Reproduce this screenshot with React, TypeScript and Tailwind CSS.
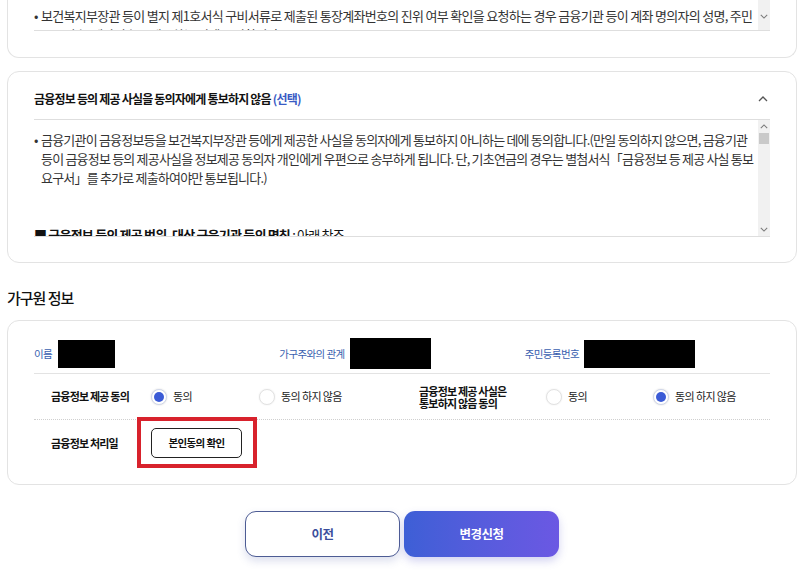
import { FC } from "react";

const FONT = { fontFamily: '"Noto Sans CJK KR", "Noto Sans", sans-serif' };

const ChevronUp: FC<{ className?: string }> = ({ className }) => (
  <svg viewBox="0 0 10 6" className={className} fill="none" stroke="currentColor" strokeWidth="1.3">
    <path d="M1 5 L5 1 L9 5" />
  </svg>
);

const ChevronDown: FC<{ className?: string }> = ({ className }) => (
  <svg viewBox="0 0 10 6" className={className} fill="none" stroke="currentColor" strokeWidth="1.3">
    <path d="M1 1 L5 5 L9 1" />
  </svg>
);

// 가짜 스크롤바
const ScrollBar: FC<{ thumb?: boolean; up?: boolean }> = ({ thumb = true, up = true }) => (
  <div className="w-[12px] shrink-0 bg-[#f1f1f1] flex flex-col items-center justify-between py-[4px] text-[#7a7a7a]">
    <div className="flex flex-col items-center w-full">
      {up && <ChevronUp className="w-[8px] h-[5px]" />}
      {thumb && <div className="w-[10px] h-[11px] bg-[#c9c9c9] mt-[4px]" />}
    </div>
    <ChevronDown className="w-[8px] h-[5px]" />
  </div>
);

const Radio: FC<{ checked?: boolean; label: string; width: string }> = ({ checked, label, width }) => (
  <div className={`flex items-center gap-[6px] ${width}`}>
    {checked ? (
      <span className="w-[16px] h-[16px] rounded-full border border-[#cfd6ea] bg-white flex items-center justify-center shadow-[0_0_2px_rgba(0,0,0,0.15)]">
        <span className="w-[10px] h-[10px] rounded-full bg-[#3b5bd6]" />
      </span>
    ) : (
      <span className="w-[16px] h-[16px] rounded-full border border-[#e2e2e2] bg-white shadow-[0_0_2px_rgba(0,0,0,0.08)]" />
    )}
    <span className="text-[11px] tracking-[-0.6px] text-[#222]">{label}</span>
  </div>
);

const Redacted: FC<{ w: string; h: string }> = ({ w, h }) => <div className={`${w} ${h} bg-black`} />;

const App: FC = () => {
  return (
    <div className="w-[804px] h-[572px] overflow-hidden bg-white px-[7px] text-[#222]" style={FONT}>
      {/* 첫번째 카드 (위쪽이 잘림) */}
      <div className="border border-t-0 border-[#e3e3e3] rounded-b-[12px] px-[26px] pb-[26px]">
        <div className="flex h-[31px] border-b border-[#dedede]">
          <div className="flex-1 overflow-hidden pt-[6px] text-[13px] leading-[19px] tracking-[-0.7px] text-[#333]">
            <div className="flex">
              <span className="w-[7px] shrink-0">•</span>
              <p>
                보건복지부장관 등이 별지 제1호서식 구비서류로 제출된 통장계좌번호의 진위 여부 확인을 요청하는 경우 금융기관 등이 계좌 명의자의 성명, 주민등록번호, 계좌번호를 제공하는 것에 동의합니다.
              </p>
            </div>
          </div>
          <div className="w-[12px] shrink-0 bg-[#f1f1f1] flex items-start justify-center pt-[14px] text-[#7a7a7a]">
            <ChevronDown className="w-[8px] h-[5px]" />
          </div>
        </div>
      </div>

      {/* 두번째 카드 */}
      <div className="mt-[13px] border border-[#e3e3e3] rounded-[12px] px-[26px] pb-[25px]">
        <div className="flex items-center justify-between pt-[19px] pb-[13px] leading-[15px]">
          <h3 className="text-[12px] font-bold tracking-[-0.8px] text-[#111]">
            금융정보 등의 제공 사실을 동의자에게 통보하지 않음 <span className="text-[#3a5bc4]">(선택)</span>
          </h3>
          <ChevronUp className="w-[10px] h-[6px] text-[#555] mr-[2px]" />
        </div>
        <div className="flex h-[118px] border-y border-[#dedede]">
          <div className="flex-1 overflow-hidden pt-[10px] text-[13px] leading-[19px] tracking-[-0.8px] text-[#333]">
            <div className="flex">
              <span className="w-[7px] shrink-0">•</span>
              <p>
                금융기관이 금융정보등을 보건복지부장관 등에게 제공한 사실을 동의자에게 통보하지 아니하는 데에 동의합니다.(만일 동의하지 않으면, 금융기관 등이 금융정보 등의 제공사실을 정보제공 동의자 개인에게 우편으로 송부하게 됩니다. 단, 기초연금의 경우는 별첨서식「금융정보 등 제공 사실 통보요구서」를 추가로 제출하여야만 통보됩니다.)
              </p>
            </div>
            <p className="mt-[38px] font-bold text-[#111]">
              ■ 금융정보 등의 제공 범위, 대상 금융기관 등의 명칭 <span className="font-normal">: 아래 참조</span>
            </p>
          </div>
          <ScrollBar />
        </div>
      </div>

      {/* 가구원 정보 */}
      <h2 className="mt-[24px] mb-[11px] text-[15px] leading-[22px] font-medium tracking-[-1px] text-[#111]">가구원 정보</h2>
      <div className="border border-[#e3e3e3] rounded-[12px] px-[26px]">
        <div className="grid grid-cols-3 pt-[17px] pb-[4px] border-b border-[#e3e3e3] items-center">
          <div className="flex items-center gap-[6px]">
            <span className="text-[10.5px] tracking-[-0.6px] text-[#3a5fb0]">이름</span>
            <Redacted w="w-[57px]" h="h-[28px]" />
          </div>
          <div className="flex items-center gap-[5px]">
            <span className="text-[10.5px] tracking-[-0.6px] text-[#3a5fb0]">가구주와의 관계</span>
            <Redacted w="w-[81px]" h="h-[31px]" />
          </div>
          <div className="flex items-center gap-[5px]">
            <span className="text-[10.5px] tracking-[-0.6px] text-[#3a5fb0]">주민등록번호</span>
            <Redacted w="w-[111px]" h="h-[28px]" />
          </div>
        </div>

        <div className="grid grid-cols-2 h-[46px] border-b border-dotted border-[#cfcfcf]">
          <div className="flex items-center pl-[17px]">
            <span className="w-[100px] text-[11px] font-bold tracking-[-0.8px] text-[#111]">금융정보 제공 동의</span>
            <Radio checked label="동의" width="w-[108px]" />
            <Radio label="동의 하지 않음" width="" />
          </div>
          <div className="flex items-center pl-[17px]">
            <span className="w-[127px] text-[11px] font-bold tracking-[-0.8px] leading-[12px] text-[#111]">
              금융정보 제공 사실은
              <br />
              통보하지 않음 동의
            </span>
            <Radio label="동의" width="w-[107px]" />
            <Radio checked label="동의 하지 않음" width="" />
          </div>
        </div>

        <div className="flex items-center pl-[17px] pt-[8px] pb-[26px]">
          <span className="w-[100px] text-[11px] font-bold tracking-[-0.8px] text-[#111]">금융정보 처리일</span>
          <div className="relative">
            <button className="w-[91px] h-[30px] border border-[#222] rounded-[5px] bg-white text-[10.5px] font-bold tracking-[-0.6px] text-[#111]">
              본인동의 확인
            </button>
            <span className="absolute -left-[14px] -right-[15px] -top-[11px] -bottom-[10px] border-[4px] border-[#d8222c] pointer-events-none" />
          </div>
        </div>
      </div>

      {/* 하단 버튼 */}
      <div className="mt-[26px] flex justify-center gap-[4px]">
        <button className="w-[155px] h-[46px] rounded-[11px] border border-[#4d5c94] bg-white text-[12.5px] font-bold tracking-[-0.5px] text-[#3a4e9c] shadow-[0_4px_8px_rgba(60,80,160,0.18)]">
          이전
        </button>
        <button className="w-[155px] h-[46px] rounded-[11px] bg-gradient-to-r from-[#3d5fd6] to-[#6b58e3] text-[12.5px] font-bold tracking-[-0.5px] text-white shadow-[0_4px_8px_rgba(80,80,200,0.25)]">
          변경신청
        </button>
      </div>
    </div>
  );
};

export default App;
